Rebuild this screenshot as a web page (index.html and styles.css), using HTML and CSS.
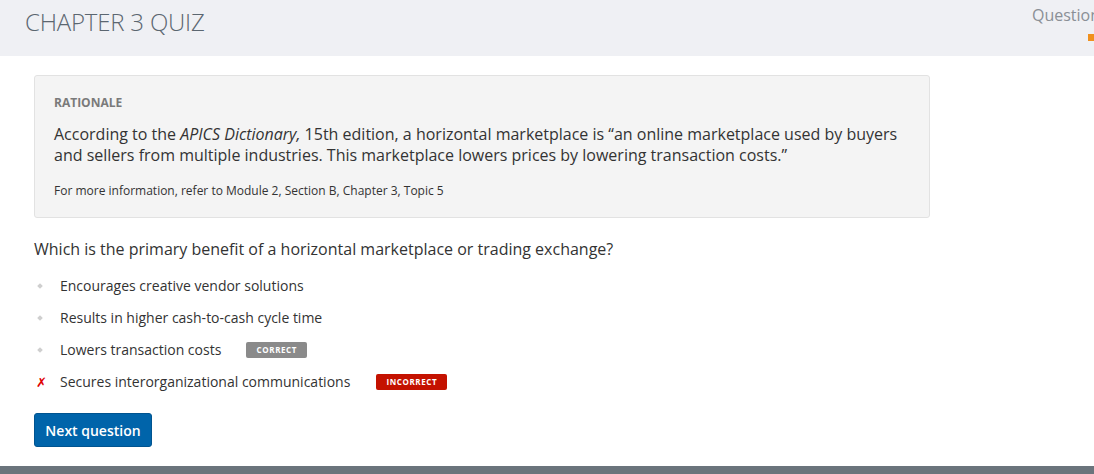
FILE: index.html
```html
<!DOCTYPE html>
<html>
<head>
<meta charset="utf-8">
<link rel="stylesheet" href="styles.css">
</head>
<body>
<header class="topbar">
  <h1 class="title">CHAPTER 3 QUIZ</h1>
  <div class="progress">
    <span class="progress-label">Question</span>
    <span class="progress-mark"></span>
  </div>
</header>
<main class="content">
  <section class="rationale">
    <div class="rationale-head">RATIONALE</div>
    <p class="rationale-text">According to the <em>APICS Dictionary,</em> 15th edition, a horizontal marketplace is “an online marketplace used by buyers and sellers from multiple industries. This marketplace lowers prices by lowering transaction costs.”</p>
    <p class="rationale-ref">For more information, refer to Module 2, Section B, Chapter 3, Topic 5</p>
  </section>
  <p class="question">Which is the primary benefit of a horizontal marketplace or trading exchange?</p>
  <ul class="options">
    <li class="option"><span class="mark"><span class="diamond"></span></span><span class="opt-text">Encourages creative vendor solutions</span></li>
    <li class="option"><span class="mark"><span class="diamond"></span></span><span class="opt-text">Results in higher cash-to-cash cycle time</span></li>
    <li class="option"><span class="mark"><span class="diamond"></span></span><span class="opt-text">Lowers transaction costs</span><span class="badge badge-correct">CORRECT</span></li>
    <li class="option"><span class="mark cross">✗</span><span class="opt-text">Secures interorganizational communications</span><span class="badge badge-incorrect">INCORRECT</span></li>
  </ul>
  <button class="next">Next question</button>
</main>
<footer class="bottombar"></footer>
</body>
</html>
```
FILE: styles.css
```css
* { box-sizing: border-box; }
html, body { margin: 0; padding: 0; }
body {
  width: 1094px;
  height: 474px;
  overflow: hidden;
  font-family: "Open Sans", "Liberation Sans", sans-serif;
  color: #333;
  background: #fff;
  display: flex;
  flex-direction: column;
}
.topbar {
  height: 56px;
  background: #eff0f4;
  display: flex;
  justify-content: space-between;
  align-items: flex-start;
  padding-left: 25px;
  flex-shrink: 0;
}
.title {
  margin: 6px 0 0;
  font-weight: 300;
  font-size: 24px;
  line-height: 32px;
  color: #5b6670;
  letter-spacing: -0.2px;
}
.progress {
  display: flex;
  flex-direction: column;
  align-items: flex-end;
  padding-top: 4px;
  margin-right: -6px;
}
.progress-label {
  font-size: 16px;
  line-height: 22px;
  color: #8a8f96;
  font-weight: 400;
}
.progress-mark {
  width: 12px;
  height: 7px;
  background: #f0901e;
  margin-top: 8px;
}
.content {
  flex: 1;
  padding: 19px 0 0 34px;
}
.rationale {
  width: 896px;
  background: #f4f4f4;
  border: 1px solid #e2e2e2;
  border-radius: 3px;
  padding: 19px 20px 18px 19px;
}
.rationale-head {
  font-size: 12px;
  font-weight: 700;
  color: #7a7a7a;
  line-height: 16px;
}
.rationale-text {
  margin: 13px 0 0;
  font-size: 16px;
  line-height: 21px;
  color: #333;
}
.rationale-ref {
  margin: 17px 0 0;
  font-size: 12px;
  line-height: 16px;
  color: #333;
}
.question {
  margin: 20px 0 0;
  font-size: 16px;
  line-height: 22px;
  color: #333;
}
.options {
  list-style: none;
  margin: 10px 0 0;
  padding: 0;
}
.option {
  display: flex;
  align-items: center;
  height: 32px;
  font-size: 14px;
  color: #333;
}
.mark {
  width: 26px;
  display: flex;
  align-items: center;
  padding-left: 2px;
}
.diamond {
  width: 4px;
  height: 4px;
  background: #cfcfcf;
  transform: rotate(45deg);
  margin-left: 2px;
}
.cross {
  color: #e00000;
  font-size: 13px;
  font-weight: 700;
  font-family: "DejaVu Sans", sans-serif;
}
.opt-text { line-height: 20px; }
.badge {
  margin-left: 25px;
  color: #fff;
  font-size: 8px;
  font-weight: 700;
  letter-spacing: 0.6px;
  height: 16px;
  line-height: 16px;
  border-radius: 2px;
  display: inline-flex;
  justify-content: center;
}
.badge-correct { background: #8a8a8a; width: 61px; }
.badge-incorrect { background: #c41200; width: 71px; margin-left: 26px; }
.next {
  margin-top: 15px;
  width: 118px;
  height: 34px;
  background: #0064aa;
  border: 1px solid #005490;
  border-radius: 3px;
  color: #fff;
  font-family: "Open Sans", "Liberation Sans", sans-serif;
  font-size: 14px;
  font-weight: 600;
  padding: 0;
}
.bottombar {
  height: 8px;
  background: #6b747c;
  flex-shrink: 0;
}
```
